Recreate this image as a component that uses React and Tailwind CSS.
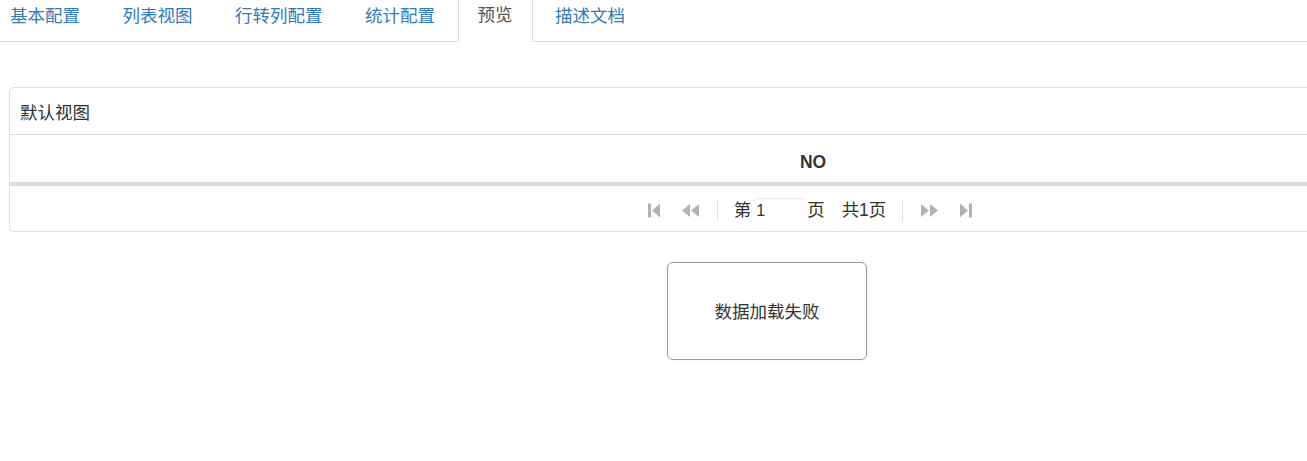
import React from "react";

const FONT = { fontFamily: '"Liberation Sans", Arial, "Noto Sans CJK SC", sans-serif' };

function FirstIcon() {
  return (
    <svg width="13" height="15" viewBox="0 0 13 15" className="block">
      <rect x="0" y="0.5" width="3" height="14" fill="#b3b3b3" />
      <polygon points="12,0.5 12,14.5 4,7.5" fill="#b3b3b3" />
    </svg>
  );
}
function PrevIcon() {
  return (
    <svg width="19" height="15" viewBox="0 0 19 15" className="block">
      <polygon points="9,1 9,14 1,7.5" fill="#b3b3b3" />
      <polygon points="18,1 18,14 10,7.5" fill="#b3b3b3" />
    </svg>
  );
}
function NextIcon() {
  return (
    <svg width="19" height="15" viewBox="0 0 19 15" className="block">
      <polygon points="1,1 1,14 9,7.5" fill="#b3b3b3" />
      <polygon points="10,1 10,14 18,7.5" fill="#b3b3b3" />
    </svg>
  );
}
function LastIcon() {
  return (
    <svg width="13" height="15" viewBox="0 0 13 15" className="block">
      <polygon points="1,0.5 1,14.5 9,7.5" fill="#b3b3b3" />
      <rect x="10" y="0.5" width="3" height="14" fill="#b3b3b3" />
    </svg>
  );
}

const tabs = ["基本配置", "列表视图", "行转列配置", "统计配置", "预览", "描述文档"];

export default function App() {
  return (
    <div
      className="relative w-[1307px] h-[461px] overflow-hidden bg-white text-[17.5px] leading-[25px] text-[#333]"
      style={FONT}
    >
      {/* Tabs */}
      <div className="flex border-b border-[#dddddd] h-[42px] w-[1700px]">
        <div className="flex ml-[-10px]">
          {tabs.map((t) => {
            const active = t === "预览";
            return (
              <div
                key={t}
                className={
                  active
                    ? "mr-[2.5px] px-[19px] pt-[3px] h-[42px] -mb-[1px] border border-t-0 border-[#dddddd] border-b-white bg-white text-[#555]"
                    : "mr-[2.5px] px-[19px] pt-[3px] h-[41px] border border-transparent text-[#337ab7]"
                }
              >
                {t}
              </div>
            );
          })}
        </div>
      </div>

      {/* Panel */}
      <div className="ml-[9px] mt-[45px] w-[1608px] border border-[#dddddd] rounded-[5px]">
        <div className="h-[47px] px-[10px] pt-[12.5px] border-b border-[#dddddd]">默认视图</div>
        <div className="h-[47px] flex justify-center pt-[15px] font-bold text-[#333]">NO</div>
        <div className="h-[4px] bg-[#dddddd]" />
        <div className="h-[45px] flex items-center justify-center pt-[3px]">
          <div className="flex items-center ml-[-6px]">
            <FirstIcon />
            <div className="w-[20px]" />
            <PrevIcon />
            <div className="w-[17px]" />
            <div className="w-[1px] h-[22px] bg-[#e2e2e2]" />
            <div className="w-[16px]" />
            <span>第</span>
            <div className="w-[52px] h-[24px] ml-[3px] rounded-[4px] shadow-[inset_0_1px_1px_rgba(0,0,0,0.09)] flex items-center pl-[2px] text-[16px]">
              1
            </div>
            <span className="ml-[1px]">页</span>
            <span className="ml-[17px]">共1页</span>
            <div className="w-[16px]" />
            <div className="w-[1px] h-[22px] bg-[#e2e2e2]" />
            <div className="w-[17px]" />
            <NextIcon />
            <div className="w-[20px]" />
            <LastIcon />
          </div>
        </div>
      </div>

      {/* Toast */}
      <div className="absolute left-[667px] top-[262px] w-[200px] h-[98px] pt-[2px] border border-[#999999] rounded-[6px] bg-white flex items-center justify-center shadow-[0_0_6px_rgba(0,0,0,0.06)]">
        数据加载失败
      </div>
    </div>
  );
}
